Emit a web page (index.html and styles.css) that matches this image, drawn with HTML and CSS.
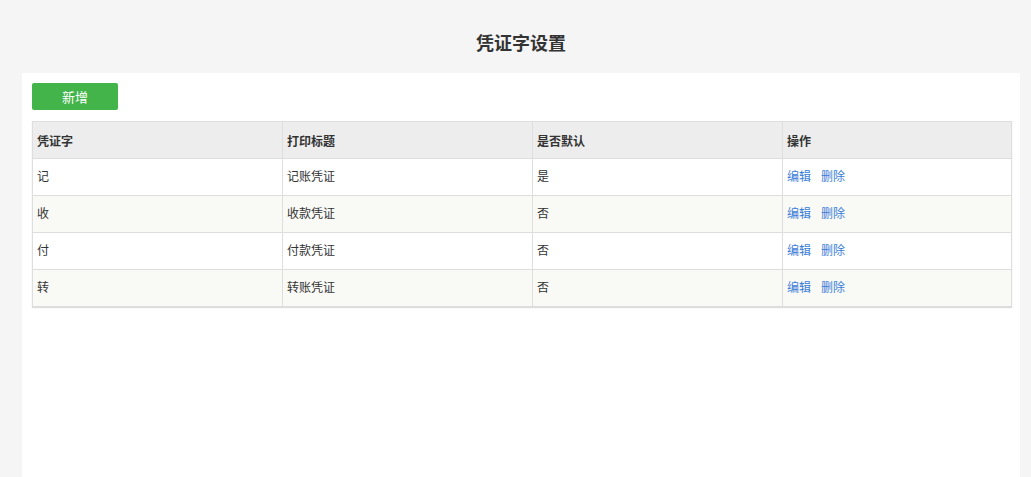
FILE: index.html
```html
<!DOCTYPE html>
<html lang="zh">
<head>
<meta charset="utf-8">
<link rel="stylesheet" href="styles.css">
</head>
<body>
<div class="page">
  <h1 class="title">凭证字设置</h1>
  <div class="panel">
    <button class="btn-add">新增</button>
    <table class="grid">
      <colgroup>
        <col class="c1"><col class="c2"><col class="c3"><col class="c4">
      </colgroup>
      <thead>
        <tr><th>凭证字</th><th>打印标题</th><th>是否默认</th><th>操作</th></tr>
      </thead>
      <tbody>
        <tr><td>记</td><td>记账凭证</td><td>是</td><td><a class="op">编辑</a><a class="op">删除</a></td></tr>
        <tr class="alt"><td>收</td><td>收款凭证</td><td>否</td><td><a class="op">编辑</a><a class="op">删除</a></td></tr>
        <tr><td>付</td><td>付款凭证</td><td>否</td><td><a class="op">编辑</a><a class="op">删除</a></td></tr>
        <tr class="alt"><td>转</td><td>转账凭证</td><td>否</td><td><a class="op">编辑</a><a class="op">删除</a></td></tr>
      </tbody>
    </table>
  </div>
</div>
</body>
</html>
```

FILE: styles.css
```css
html, body {
  margin: 0;
  padding: 0;
  background: #f5f5f5;
  font-family: "Microsoft YaHei", "Noto Sans CJK SC", "Liberation Sans", sans-serif;
  color: #333;
  font-size: 12px;
}
.page {
  padding: 0 11px 0 22px;
  height: 477px;
  display: flex;
  flex-direction: column;
}
.title {
  margin: 0;
  height: 73px;
  display: flex;
  align-items: center;
  justify-content: center;
  font-size: 18px;
  font-weight: bold;
  color: #333;
  padding-top: 10px;
  box-sizing: border-box;
}
.panel {
  flex: 1;
  background: #fff;
  padding: 10px 8px 0 10px;
}
.btn-add {
  display: block;
  width: 86px;
  height: 27px;
  border: none;
  border-radius: 2px;
  background: #43b449;
  color: #fff;
  font-family: inherit;
  font-size: 13px;
  padding: 0;
  margin: 0 0 11px 0;
  cursor: pointer;
}
.grid {
  width: 979px;
  border-collapse: collapse;
  table-layout: fixed;
  border: 1px solid #d9d9d9;
  box-shadow: 0 1px 1px #ddd;
}
.c1, .c2, .c3 { width: 250px; }
.c4 { width: 229px; }
.grid th, .grid td {
  height: 36px;
  padding: 0 4px;
  text-align: left;
  border: 1px solid #dedede;
  font-size: 12px;
  color: #333;
}
.grid th {
  background: #ededed;
  font-weight: bold;
  color: #333;
}
.grid td {
  font-weight: normal;
  padding-bottom: 3px;
  height: 33px;
}
.grid tr.alt td { background: #f9faf6; }
.op {
  color: #3b7dd8;
  cursor: pointer;
  margin-right: 10px;
}
```
